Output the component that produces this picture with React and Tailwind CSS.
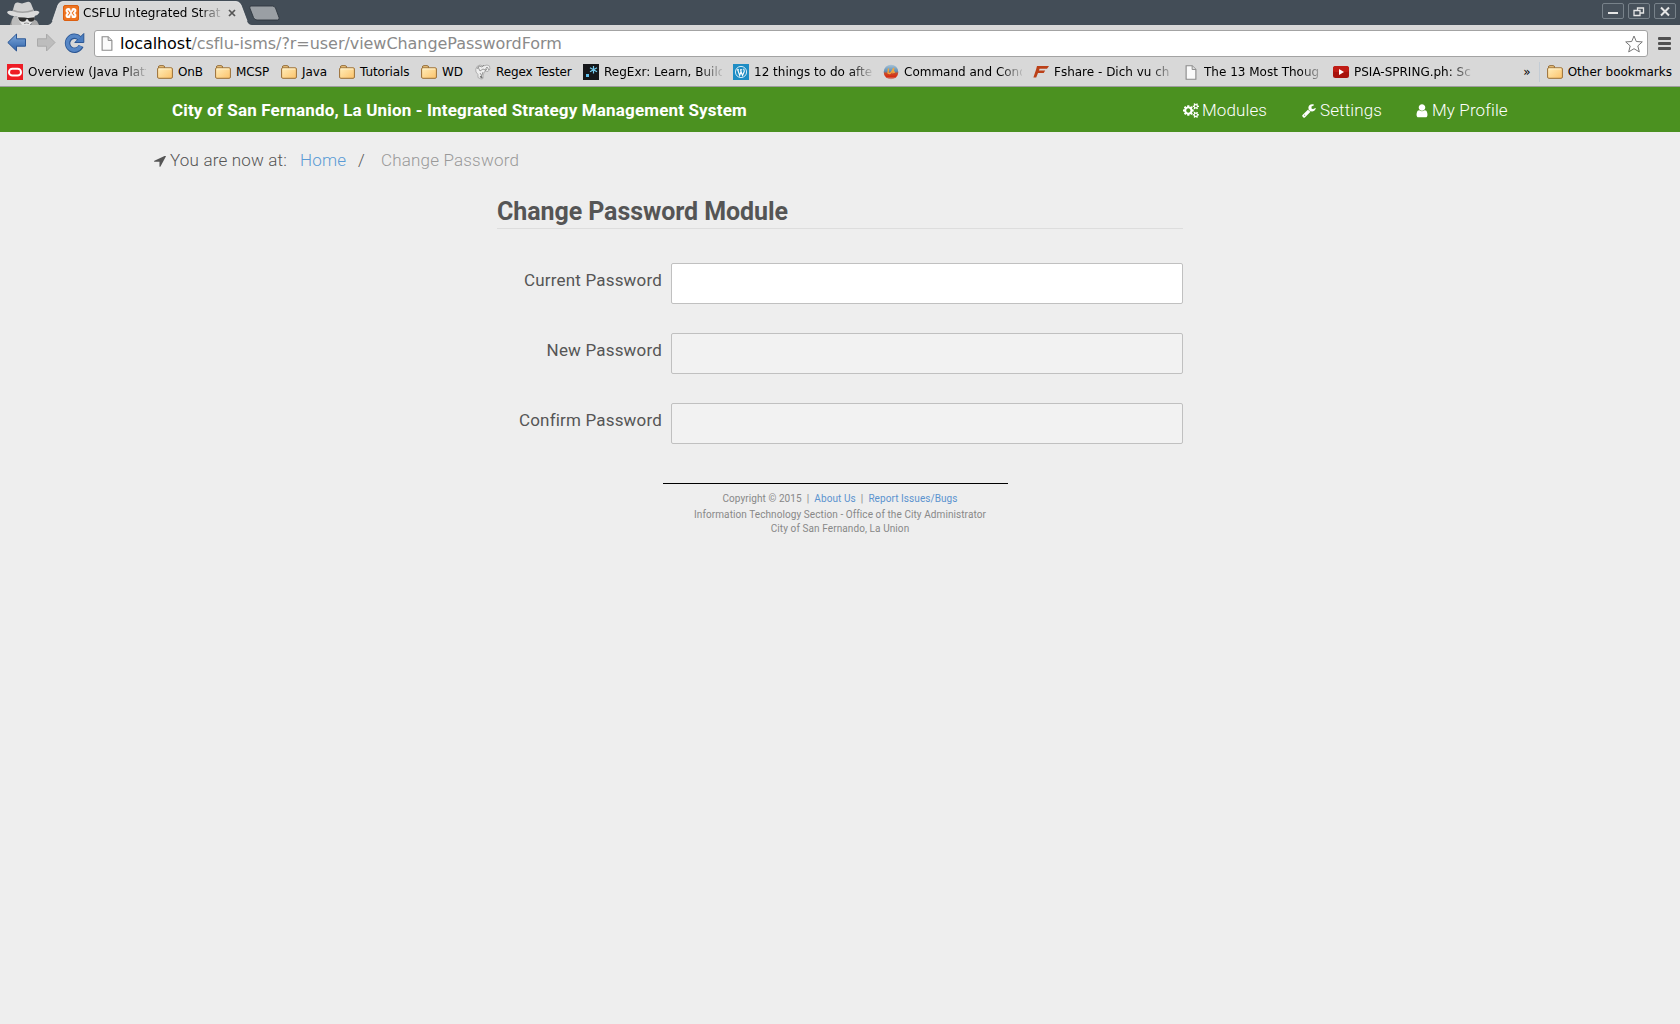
import React from "react";

const COG_SMALL =
  "M1664 1408q0-52-38-90t-90-38-90 38-38 90q0 53 37.500 90.500t90.500 37.500 90.500-37.500 37.500-90.500zM1920 1339v140q0 16-149 31-12 27-30 52 51 113 51 138 0 4-4 7-122 71-124 71-8 0-46-47t-52-68q-20 2-30 2t-30-2q-14 21-52 68t-46 47q-2 0-124-71-4-3-4-7 0-25 51-138-18-25-30-52-149-15-149-31v-140q0-16 149-31 13-29 30-52-51-113-51-138 0-4 4-7 4-2 35-20t59-34 30-16q8 0 46 46.500t52 67.500q20-2 30-2t30 2q51-71 92-112l6-2q4 0 124 70 4 3 4 7 0 25-51 138 17 23 30 52 149 15 149 31z";

function CogsIcon() {
  return (
    <svg className="relative top-px" width="16" height="15" viewBox="0 0 1920 1792" fill="#fff" fillRule="evenodd">
      <path d="M896 896q0-106-75-181t-181-75-181 75-75 181 75 181 181 75 181-75 75-181zM1280 805v185q0 10-7 19.500t-16 10.500l-155 24q-11 35-32 76 34 48 90 115 7 11 7 20 0 12-7 19-23 30-82.500 89.500t-78.500 59.500q-11 0-21-7l-115-90q-37 19-77 31-11 108-23 155-7 24-30 24h-186q-11 0-20-7.500t-10-17.500l-23-153q-34-10-75-31l-118 89q-7 7-20 7-11 0-21-8-144-133-144-160 0-9 7-19 10-14 41-53t47-61q-23-44-35-82l-152-24q-10-1-17-9.500t-7-19.500v-185q0-10 7-19.500t16-10.500l155-24q11-35 32-76-34-48-90-115-7-11-7-20 0-12 7-20 22-30 82-89t79-59q11 0 21 7l115 90q34-18 77-32 11-108 23-154 7-24 30-24h186q11 0 20 7.500t10 17.500l23 153q34 10 75 31l118-89q8-7 20-7 11 0 21 8 144 133 144 160 0 8-7 19-12 16-42 54t-45 60q23 48 34 82l152 23q10 2 17 10.500t7 19.500z" />
      <path d={COG_SMALL} />
      <path d={COG_SMALL} transform="translate(0 -1024)" />
    </svg>
  );
}

function WrenchIcon() {
  return (
    <svg className="relative top-px" width="14" height="15" viewBox="60 0 1700 1792" fill="#fff">
      <path d="M448 1472q0-26-19-45t-45-19-45 19-19 45 19 45 45 19 45-19 19-45zm644-420l-682 682q-37 37-90 37-52 0-91-37l-106-108q-38-36-38-90 0-53 38-91l681-681q39 98 114.500 173.500t173.500 114.500zm634-435q0 39-23 106-47 134-164.500 217.500t-258.500 83.500q-185 0-316.500-131.500t-131.500-316.500 131.500-316.500 316.500-131.500q58 0 121.500 16.500t107.500 46.500q16 11 16 28t-16 28l-293 169v224l193 107q5-3 79-48.500t135.500-81 70.500-35.500q15 0 23.500 10t8.500 25z" />
    </svg>
  );
}

function UserIcon() {
  return (
    <svg className="relative top-px" width="12" height="14" viewBox="216 100 1360 1640" fill="#fff">
      <path d="M1536 1399q0 109-62.500 187t-150.500 78h-854q-88 0-150.500-78t-62.500-187q0-85 8.500-160.500t31.500-152 58.500-131 94-89 134.500-34.500q131 128 313 128t313-128q76 0 134.500 34.500t94 89 58.500 131 31.500 152 8.500 160.500zm-256-887q0 159-112.500 271.500t-271.500 112.500-271.500-112.500-112.500-271.500 112.500-271.500 271.500-112.500 271.500 112.500 112.500 271.500z" />
    </svg>
  );
}

function ArrowIcon() {
  return (
    <svg className="relative top-px" width="12" height="11" viewBox="180 300 1430 1380" preserveAspectRatio="none" fill="#555">
      <path d="M1593 349l-640 1280q-17 35-57 35-5 0-15-2-22-5-35.500-22.500t-13.500-39.500v-576h-576q-22 0-39.500-13.500t-22.500-35.500 4-42 29-30l1280-640q13-7 29-7 27 0 45 19 15 14 18.500 34.500t-6.500 39.500z" />
    </svg>
  );
}

function Incognito() {
  return (
    <svg width="34" height="24" viewBox="0 0 34 24">
      <path d="M3 24l2-6 6-3 3 9z" fill="#8f8f8f" />
      <path d="M7 15l6 1 3 8H5q-1-5 2-9z" fill="#bcbcbc" />
      <path d="M26 18l4 2 2 4h-8z" fill="#aaa" />
      <path d="M10 13h18l-1 6-4 5h-8l-4-6z" fill="#e4e4e4" />
      <path d="M5 12L7.500 3.500Q8.500 1 11 1.500l4 1 5-1.500q3-.8 4 1.500L27 10l-2 4H7z" fill="#d0d0d0" />
      <path d="M6 8.500q9 4 20 0l.8 2.500q-10 4-21.500.5z" fill="#a2a2a2" />
      <path d="M0 11q2-2 5-1 10 4 22 0 3-1 5.500 1-1 3.500-7 4.500-9 1-19-.5-5.500-1-6.500-4z" fill="#dadada" />
      <path d="M11 16.300l6.500.2 3.500.4 6.500-.6v1.400q-.5 3-3.500 3-2.500 0-3.200-2.500h-1.400q-.6 2.500-3.400 2.500-3.500 0-4.500-3z" fill="#2f2f2f" />
      <path d="M17 22.500q2.500-1 5 0" stroke="#8a8a8a" fill="none" />
    </svg>
  );
}

function Xampp() {
  return (
    <svg width="16" height="16" viewBox="0 0 16 16">
      <rect x=".5" y=".5" width="15" height="15" rx="1.500" fill="#ee7420" stroke="#dc5f10" />
      <g fill="#fff">
        <circle cx="5.300" cy="5.600" r="2.700" />
        <circle cx="10.700" cy="5.600" r="2.700" />
        <circle cx="5.300" cy="10.400" r="2.700" />
        <circle cx="10.700" cy="10.400" r="2.700" />
        <rect x="5" y="6.500" width="6" height="3" />
      </g>
      <path d="M4.800 5.500L6.800 8l-2 2.500M11.200 5.500L9.200 8l2 2.500M8 4v1.500M8 10.500V12" fill="none" stroke="#ee7420" strokeWidth="1.100" />
    </svg>
  );
}

function Page({ w = 12, h = 16 }) {
  return (
    <svg width={w} height={h} viewBox="0 0 12 16">
      <path d="M.8.800h6.400l4 4v10.400H.8z" fill="#fafafa" stroke="#8b8b8b" strokeWidth="1.200" />
      <path d="M7.200.800v4h4" fill="#ddd" stroke="#8b8b8b" />
    </svg>
  );
}

function Folder() {
  return (
    <svg width="16" height="14" viewBox="0 0 16 14">
      <defs>
        <linearGradient id="folder" x1="0" y1="0" x2="1" y2="1">
          <stop offset="0" stopColor="#ffeebb" />
          <stop offset="1" stopColor="#fcc26a" />
        </linearGradient>
      </defs>
      <path d="M1.500 3.500V2q0-1.300 1.300-1.300h3.400q1.300 0 1.300 1.300v1" fill="#f5cd85" stroke="#8f6730" />
      <path d="M.6 4q0-1.200 1.200-1.200h12.400q1.200 0 1.200 1.200v8q0 1.300-1.200 1.300H1.800Q.6 13.300.6 12z" fill="url(#folder)" stroke="#9a6e35" />
      <path d="M1.600 4h12.600" stroke="#fff6d8" strokeWidth=".8" />
    </svg>
  );
}

function Oracle() {
  return (
    <svg width="16" height="16" viewBox="0 0 16 16">
      <rect width="16" height="16" fill="#ee1c25" />
      <rect x="2" y="4.800" width="12" height="6.800" rx="3.400" fill="none" stroke="#fff" strokeWidth="2" />
    </svg>
  );
}

function Gnu() {
  return (
    <svg width="16" height="16" viewBox="0 0 16 16" fill="none" stroke="#777">
      <path d="M2 2.500Q0 5 1 8l2 2.500v3L6 15l2-.5V11l2-4 3 .5q3-2.500 1.500-5.500L12 1 8 2 5 1z" fill="#eee" stroke="#999" strokeWidth=".7" />
      <path d="M2 5l2-3 3 1 2-2M5 7l3-2 2 1 2-3 2 3M5 9l2 3M8 8l-1 3M12 5l-2 2M3 3l2 4" strokeWidth=".7" />
      <path d="M5.500 12l1.500 2" strokeWidth="2" />
    </svg>
  );
}

function RegExr() {
  return (
    <svg width="16" height="16" viewBox="0 0 16 16">
      <rect width="16" height="16" fill="#15171a" />
      <rect x="3" y="10" width="3" height="3" fill="#5fc0ee" />
      <path d="M10.500 2v7.500M7 3.800l7 4M14 3.800l-7 4" stroke="#74ccf0" strokeWidth="1.200" />
    </svg>
  );
}

function WordPress() {
  return (
    <svg width="16" height="16" viewBox="0 0 16 16">
      <rect width="16" height="16" fill="#1f8dc4" />
      <circle cx="8" cy="8" r="5.600" fill="none" stroke="#e8f4fa" strokeWidth=".9" />
      <path d="M3.800 5.800h2.200M7 5.800h2.200M4.700 5.800l2 5.700L8 7.800 7.700 5.800M8 7.500l1.500 4 1.700-4Q11.300 6 10.500 4.800" fill="none" stroke="#fff" strokeWidth="1.100" />
    </svg>
  );
}

function Ball() {
  return (
    <svg width="16" height="16" viewBox="0 0 16 16">
      <defs>
        <linearGradient id="ball" x1="0" y1="0" x2="0" y2="1">
          <stop offset="0" stopColor="#a9c4d8" />
          <stop offset=".45" stopColor="#5f8fb4" />
          <stop offset=".6" stopColor="#c8492a" />
          <stop offset=".82" stopColor="#d92c10" />
          <stop offset="1" stopColor="#c9a9a4" />
        </linearGradient>
      </defs>
      <circle cx="8" cy="8" r="7.300" fill="url(#ball)" />
      <path d="M5.500 4.500L5 9q2 1.500 3.500-1L10.800 4 10 8.500l2-.5" fill="none" stroke="#f3a53c" strokeWidth="1.400" />
    </svg>
  );
}

function Fshare() {
  return (
    <svg width="16" height="16" viewBox="0 0 16 16">
      <path d="M4 2h12l-2 2.700H6.600L5.900 6.500h6.300l-1.500 2.600H5L3.200 13.500H.4L3 5.800z" fill="#bb4018" />
    </svg>
  );
}

function YouTube() {
  return (
    <svg width="16" height="16" viewBox="0 0 16 16">
      <rect y="2" width="16" height="12" rx="2.500" fill="#a8120c" />
      <rect y="2" width="16" height="6" rx="2.500" fill="#c01c15" />
      <path d="M6 5l5 3-5 3z" fill="#fff" />
    </svg>
  );
}

const FADE = "[mask-image:linear-gradient(to_right,#000_calc(100%_-_22px),transparent_calc(100%_+_3px))]";

const BOOKMARKS = [
  { icon: <Oracle />, label: "Overview (Java Platf", w: "w-[150px]", fade: true },
  { icon: <Folder />, label: "OnB", w: "w-[58px]" },
  { icon: <Folder />, label: "MCSP", w: "w-[66px]" },
  { icon: <Folder />, label: "Java", w: "w-[58px]" },
  { icon: <Folder />, label: "Tutorials", w: "w-[82px]" },
  { icon: <Folder />, label: "WD", w: "w-[54px]" },
  { icon: <Gnu />, label: "Regex Tester", w: "w-[108px]" },
  { icon: <RegExr />, label: "RegExr: Learn, Build", w: "w-[150px]", fade: true },
  { icon: <WordPress />, label: "12 things to do afte", w: "w-[150px]", fade: true },
  { icon: <Ball />, label: "Command and Conq", w: "w-[150px]", fade: true },
  { icon: <Fshare />, label: "Fshare - Dich vu ch", w: "w-[150px]", fade: true },
  { icon: <Page w={12} h={15} />, label: "The 13 Most Thoug", w: "w-[150px]", fade: true },
  { icon: <YouTube />, label: "PSIA-SPRING.ph: Sc", w: "w-[150px]", fade: true },
];

function TitleBar() {
  return (
    <div className="flex h-[25px] bg-[#434d57]">
      <div className="ml-[7px] w-[34px] pt-px"><Incognito /></div>
      <div className="relative ml-[7px] h-[25px] w-[206px]">
        <svg className="absolute inset-0" width="206" height="25" viewBox="0 0 206 25">
          <path d="M0 25Q3 24.500 4.500 21L10 5Q11.500 1.500 15 1.500h173q3.500 0 5 3.500l6 16q1.500 4 5 4z" fill="#d8d8d8" />
          <path d="M4.500 21L10 5Q11.500 1.500 15 1.500h173q3.500 0 5 3.500l6 16" fill="none" stroke="#eee" strokeWidth=".8" />
        </svg>
        <div className="relative flex h-[25px] items-center pl-[15px]">
          <Xampp />
          <span className={"ml-1 w-[138px] overflow-hidden whitespace-nowrap text-[12px] leading-[16px] text-black " + FADE}>CSFLU Integrated Strat</span>
          <svg className="ml-[7px]" width="8" height="8" viewBox="0 0 8 8"><path d="M1 1l6 6M7 1L1 7" stroke="#555" strokeWidth="1.700" /></svg>
        </div>
      </div>
      <svg className="-ml-[5px] mt-[5px]" width="32" height="16" viewBox="0 0 32 16">
        <path d="M2 1h21.500q2 0 3 2l3.500 9.500q.8 2.500-1.500 2.500H8q-2.500 0-3.500-2.500L.8 3Q.3 1 2 1z" fill="#9a9fa4" stroke="#2f373e" strokeWidth=".9" />
      </svg>
      <div className="ml-auto mr-1 mt-[3px] flex gap-1">
        {["M6 10h10", "M6 7.500h6v5H6zM9.500 7V5h6v5h-3", "M7 4.500l8 8M15 4.500l-8 8"].map((d, i) => (
          <svg key={d} width="22" height="16" viewBox="0 0 22 16">
            <rect x=".5" y=".5" width="21" height="15" rx="1.500" fill="#47515b" stroke="#78828a" />
            <path d={d} fill="none" stroke="#e6e6e6" strokeWidth={i === 1 ? 1.3 : 2} />
          </svg>
        ))}
      </div>
    </div>
  );
}

function Toolbar() {
  return (
    <div className="flex h-[33px] pt-[5px]">
      <svg className="ml-[7px] mt-[3px]" width="20" height="20" viewBox="0 0 20 20">
        <defs>
          <linearGradient id="blue" x1="0" y1="0" x2="0" y2="1">
            <stop offset="0" stopColor="#7fa9dc" />
            <stop offset="1" stopColor="#2f62a8" />
          </linearGradient>
        </defs>
        <path d="M.8 9.500L9.500 1v4.800H18.500v7.400H9.500V18z" fill="url(#blue)" stroke="#2c5794" />
      </svg>
      <svg className="ml-[9px] mt-[3px]" width="20" height="20" viewBox="0 0 20 20">
        <path d="M19 9.500L10.500 1v4.800H1.500v7.400h9V18z" fill="#bdbdbd" stroke="#aaa" />
      </svg>
      <svg className="ml-[8px] mt-[2px]" width="21" height="22" viewBox="0 0 21 22">
        <path d="M15.500 6.300A7 7 0 1 0 17 14" fill="none" stroke="#2c5794" strokeWidth="5.400" />
        <path d="M19.800 1.500v9h-9z" fill="#4a7dc0" stroke="#2c5794" />
        <path d="M15.500 6.300A7 7 0 1 0 16.700 14" fill="none" stroke="#5686c5" strokeWidth="3.600" />
      </svg>
      <div className="ml-[9px] flex h-[27px] w-[1554px] items-center rounded-[3px] border border-[#a3a3a3] bg-white pl-[6px] pr-1">
        <Page w={12} h={15} />
        <span className="ml-[7px] whitespace-pre text-[16px] leading-[20px] tracking-[-0.05px] text-[#8a8a8a]"><span className="text-black">localhost</span>/csflu-isms/?r=user/viewChangePasswordForm</span>
        <svg className="ml-auto" width="18" height="18" viewBox="0 0 18 18">
          <path d="M9 1l2.300 5.500 6 .4-4.500 4 1.500 6L9 13.700l-5.300 3.200 1.500-6-4.500-4 6-.4z" fill="#fff" stroke="#777" strokeLinejoin="round" />
        </svg>
      </div>
      <div className="ml-[10px] mt-[7px] flex w-[13px] flex-col gap-[2px]">
        {[0, 1, 2].map((i) => <div key={i} className="h-[3px] rounded-[1px] bg-[#505050]" />)}
      </div>
    </div>
  );
}

function BookmarkBar() {
  return (
    <div className="flex h-[29px] items-center border-b border-[#9d9d9d] pl-[7px] text-[12px] leading-[16px] text-black">
      {BOOKMARKS.map((b) => (
        <div key={b.label} className={"flex shrink-0 items-center gap-[5px] pr-[11px] " + b.w}>
          <span className="flex w-4 shrink-0 justify-center">{b.icon}</span>
          <span className={"min-w-0 flex-1 whitespace-nowrap " + (b.fade ? "overflow-hidden " + FADE : "tracking-[-0.1px]")}>{b.label}</span>
        </div>
      ))}
      <span className="ml-auto mr-[8px]">»</span>
      <span className="h-5 w-px bg-[#c3ccd5]" />
      <span className="ml-[7px] mr-[8px] flex items-center gap-[5px]"><Folder />Other bookmarks</span>
    </div>
  );
}

function Field({ label, bg }) {
  return (
    <label className="flex h-[41px]">
      <span className="w-[165px] pt-[5px] text-right text-[17px] leading-[24px] tracking-[0.18px]">{label}</span>
      <input type="password" className={"ml-[9px] w-[512px] rounded-[2px] border border-[#c0c0c0] px-2 outline-none " + bg} />
    </label>
  );
}

export default function App() {
  return (
    <div className="flex h-[1024px] w-[1680px] flex-col overflow-hidden bg-[#eee] font-['Roboto',sans-serif] text-[#555]">
      <div className="h-[87px] shrink-0 bg-[#d8d8d8] font-['DejaVu_Sans',sans-serif]">
        <TitleBar />
        <Toolbar />
        <BookmarkBar />
      </div>
      <nav className="flex h-[45px] shrink-0 items-center bg-[#4b9120] pl-[172px] text-[17px] leading-[24px] text-white">
        <span className="font-bold tracking-[0.16px]">City of San Fernando, La Union - Integrated Strategy Management System</span>
        <div className="ml-auto flex pr-[171px] font-light tracking-[0.12px]">
          <span className="flex w-[119px] items-center gap-[3px]"><CogsIcon />Modules</span>
          <span className="flex w-[114px] items-center gap-1"><WrenchIcon />Settings</span>
          <span className="flex w-[93px] items-center gap-[4px] whitespace-nowrap"><UserIcon />My Profile</span>
        </div>
      </nav>
      <div className="mt-4 flex h-6 items-center pl-[154px] text-[17px] font-light leading-[24px] tracking-[0.18px]">
        <ArrowIcon />
        <span className="ml-[4px] w-[130px]">You are now at:</span>
        <span className="w-[58px] text-[#5b9bd5]">Home</span>
        <span className="w-[23px]">/</span>
        <span className="text-[#999]">Change Password</span>
      </div>
      <main className="ml-[497px] w-[686px]">
        <h1 className="mt-[22px] h-[35px] border-b border-[#ddd] text-[25px] font-bold leading-[35px] tracking-[-0.08px]">Change Password Module</h1>
        <div className="mt-[34px] flex flex-col gap-[29px]">
          <Field label="Current Password" bg="bg-white" />
          <Field label="New Password" bg="bg-[#f2f2f2]" />
          <Field label="Confirm Password" bg="bg-[#f2f2f2]" />
        </div>
      </main>
      <footer className="mt-[39px] text-center text-[10px] leading-[14px] text-[#888]">
        <div className="ml-[663px] h-px w-[345px] bg-black" />
        <p className="mt-[8px] whitespace-pre tracking-[0.07px]">Copyright © 2015  |  <span className="text-[#5b93cf]">About Us</span>  |  <span className="text-[#5b93cf]">Report Issues/Bugs</span></p>
        <p className="mt-[2px] tracking-[0.08px]">Information Technology Section - Office of the City Administrator</p>
        <p className="tracking-[0.09px]">City of San Fernando, La Union</p>
      </footer>
    </div>
  );
}
